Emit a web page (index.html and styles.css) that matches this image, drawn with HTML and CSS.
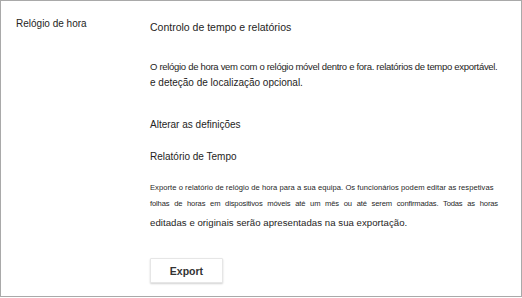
FILE: index.html
```html
<!DOCTYPE html>
<html lang="pt">
<head>
<meta charset="utf-8">
<link rel="stylesheet" href="styles.css">
</head>
<body>
<div class="frame">
  <div class="side">Relógio de hora</div>
  <div class="main">
    <div class="title">Controlo de tempo e relatórios</div>
    <p class="desc">O relógio de hora vem com o relógio móvel dentro e fora. relatórios de tempo exportável.<br><span class="desc2">e deteção de localização opcional.</span></p>
    <div class="link">Alterar as definições</div>
    <div class="sub">Relatório de Tempo</div>
    <div class="small">
      <div class="small-line">Exporte o relatório de relógio de hora para a sua equipa. Os funcionários podem editar as respetivas</div>
      <div class="small-line justified">folhas de horas em dispositivos móveis até um mês ou até serem confirmadas. Todas as horas</div>
    </div>
    <p class="last">editadas e originais serão apresentadas na sua exportação.</p>
    <button class="btn">Export</button>
  </div>
</div>
</body>
</html>
```
FILE: styles.css
```css
* { box-sizing: border-box; }
html, body { margin: 0; padding: 0; background: #fff; }
body { font-family: "Liberation Sans", Arial, sans-serif; color: #252423; }
.frame {
  width: 522px;
  height: 297px;
  border: 1px solid #a9a9a9;
  display: flex;
  padding: 16px 0 0 15px;
}
.side {
  width: 134px;
  font-size: 10px;
  line-height: 14px;
}
.main {
  width: 360px;
  display: flex;
  flex-direction: column;
  align-items: flex-start;
}
.title { font-size: 10.5px; line-height: 14px; margin-top: 3px; }
.desc { font-size: 9.5px; line-height: 16px; margin: 25px 0 0; letter-spacing: -0.3px; }
.desc2 { font-size: 10px; letter-spacing: 0; }
.link { font-size: 10px; line-height: 14px; margin-top: 27px; }
.sub { font-size: 10px; line-height: 14px; margin-top: 18px; }
.small {
  font-size: 7.6px;
  line-height: 16px;
  margin-top: 16px;
  width: 348px;
  color: #1f1f1f;
}
.small-line { white-space: nowrap; letter-spacing: 0.05px; }
.justified { white-space: normal; text-align: justify; text-align-last: justify; letter-spacing: -0.15px; }
.last { font-size: 9.6px; line-height: 16px; margin: 3px 0 0; letter-spacing: 0.05px; }
.btn {
  margin-top: 27px;
  width: 73px;
  height: 25px;
  background: #fff;
  border: 1px solid #e6e6e6;
  box-shadow: 0 1px 2px rgba(0,0,0,0.18);
  font-family: inherit;
  font-size: 10.5px;
  font-weight: bold;
  color: #333;
  border-radius: 1px;
}
```
